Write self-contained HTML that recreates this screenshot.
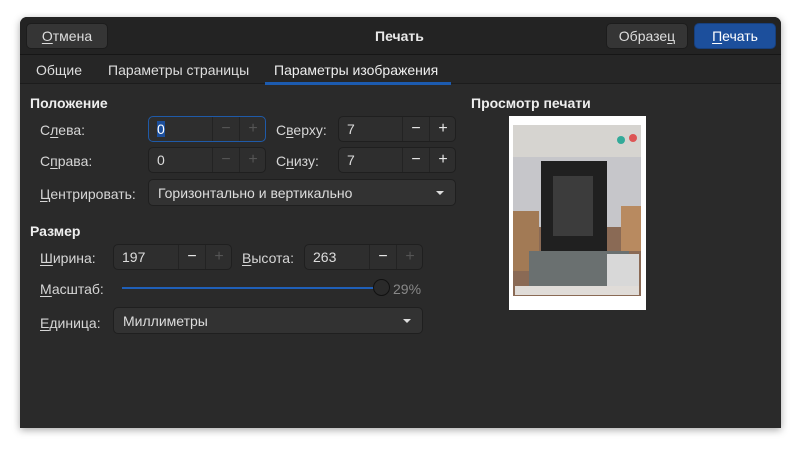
<!DOCTYPE html>
<html><head><meta charset="utf-8"><style>
*{margin:0;padding:0;box-sizing:border-box}
body{width:800px;height:450px;background:#fff;position:relative;overflow:hidden;font-family:"Liberation Sans","DejaVu Sans",sans-serif;font-size:14px;color:#e8e8e8}
.win{position:absolute;left:20px;top:17px;width:761px;height:411px;background:#2a2a2a;border-radius:7px 7px 0 0;box-shadow:0 2px 8px rgba(0,0,0,.35);overflow:hidden}
.hb{position:absolute;left:0;top:0;width:761px;height:38px;background:#232323;border-bottom:1px solid #161616}
.tabs{position:absolute;left:0;top:38px;width:761px;height:29px;background:#262626;border-bottom:1px solid #1c1c1c}
.a{position:absolute;white-space:nowrap}
.btn{position:absolute;background:#353535;border:1px solid #1c1c1c;border-radius:5px;text-align:center;line-height:24px;color:#ddd}
u{text-decoration:underline;text-underline-offset:2px}
.lbl{position:absolute;color:#d6d6d6;white-space:nowrap}
.spin{position:absolute;height:26px;background:#2e2e2e;border:1px solid #1f1f1f;border-radius:5px}
.spin .v{position:absolute;left:8px;top:4px;color:#ddd}
.spin .m,.spin .p{position:absolute;top:0;width:27px;height:24px;text-align:center;line-height:23px;border-left:1px solid #232323;font-size:16px}
.dim{color:#555}
.combo{position:absolute;height:27px;background:#323232;border:1px solid #1f1f1f;border-radius:5px}
.combo .v{position:absolute;left:9px;top:5px;color:#ddd}
.combo .ar{position:absolute;right:11px;top:11px;width:0;height:0;border-left:4px solid transparent;border-right:4px solid transparent;border-top:4px solid #ddd}
b{font-weight:bold;color:#eee}
</style></head><body>
<div class="win">
 <div class="hb"></div>
 <div class="btn" style="left:6px;top:6px;width:82px;height:26px"><u>О</u>тмена</div>
 <div class="a" style="left:355px;top:11px;font-weight:bold">Печать</div>
 <div class="btn" style="left:586px;top:6px;width:82px;height:26px">Образе<u>ц</u></div>
 <div class="btn" style="left:674px;top:6px;width:82px;height:26px;background:#1c4f9c;border-color:#173f7c;color:#fff"><u>П</u>ечать</div>
 <div class="tabs"></div>
 <div class="a" style="left:16px;top:45px;color:#ddd">Общие</div>
 <div class="a" style="left:88px;top:45px;color:#ddd">Параметры страницы</div>
 <div class="a" style="left:254px;top:45px;color:#eee">Параметры изображения</div>
 <div class="a" style="left:245px;top:65px;width:186px;height:3px;background:#1c5bb0"></div>

 <div class="a" style="left:10px;top:78px"><b>Положение</b></div>
 <div class="lbl" style="left:20px;top:105px">С<u>л</u>ева:</div>
 <div class="spin" style="left:128px;top:99px;width:118px;border-color:#1f5aa8"><span class="v" style="background:#1c4f9c;color:#fff">0</span><span class="m dim" style="left:63px">−</span><span class="p dim" style="left:90px">+</span></div>
 <div class="lbl" style="left:256px;top:105px">С<u>в</u>ерху:</div>
 <div class="spin" style="left:318px;top:99px;width:118px"><span class="v">7</span><span class="m" style="left:63px">−</span><span class="p" style="left:90px">+</span></div>
 <div class="lbl" style="left:20px;top:136px">С<u>п</u>рава:</div>
 <div class="spin" style="left:128px;top:130px;width:118px"><span class="v">0</span><span class="m dim" style="left:63px">−</span><span class="p dim" style="left:90px">+</span></div>
 <div class="lbl" style="left:256px;top:136px">С<u>н</u>изу:</div>
 <div class="spin" style="left:318px;top:130px;width:118px"><span class="v">7</span><span class="m" style="left:63px">−</span><span class="p" style="left:90px">+</span></div>
 <div class="lbl" style="left:20px;top:169px"><u>Ц</u>ентрировать:</div>
 <div class="combo" style="left:128px;top:162px;width:308px"><span class="v">Горизонтально и вертикально</span><span class="ar"></span></div>

 <div class="a" style="left:10px;top:206px"><b>Размер</b></div>
 <div class="lbl" style="left:20px;top:233px"><u>Ш</u>ирина:</div>
 <div class="spin" style="left:93px;top:227px;width:119px"><span class="v">197</span><span class="m" style="left:64px">−</span><span class="p dim" style="left:91px">+</span></div>
 <div class="lbl" style="left:222px;top:233px"><u>В</u>ысота:</div>
 <div class="spin" style="left:284px;top:227px;width:119px"><span class="v">263</span><span class="m" style="left:64px">−</span><span class="p dim" style="left:91px">+</span></div>
 <div class="lbl" style="left:20px;top:264px"><u>М</u>асштаб:</div>
 <div class="a" style="left:102px;top:270px;width:260px;height:2px;background:#1f5fb8"></div>
 <div class="a" style="left:353px;top:262px;width:17px;height:17px;border-radius:50%;background:#2a2a2a;border:1px solid #111"></div>
 <div class="lbl" style="left:373px;top:264px;color:#888">29%</div>
 <div class="lbl" style="left:20px;top:298px"><u>Е</u>диница:</div>
 <div class="combo" style="left:93px;top:290px;width:310px"><span class="v">Миллиметры</span><span class="ar"></span></div>

 <div class="a" style="left:451px;top:78px"><b>Просмотр печати</b></div>
 <div class="a" style="left:489px;top:99px;width:137px;height:194px;background:#fff">
  <svg width="137" height="194" viewBox="0 0 137 194" style="position:absolute;left:0;top:0">
   <rect x="4" y="9" width="128" height="171" fill="#8a6a55"/>
   <rect x="4" y="9" width="128" height="32" fill="#d6d4d0"/>
   <rect x="4" y="41" width="128" height="70" fill="#c6c6ca"/>
   <rect x="32" y="45" width="66" height="95" fill="#202020"/>
   <rect x="44" y="60" width="40" height="60" fill="#3c3c3c"/>
   <rect x="4" y="95" width="26" height="60" fill="#a27a55"/>
   <rect x="112" y="90" width="20" height="45" fill="#b88a60"/>
   <rect x="20" y="135" width="100" height="42" fill="#6a7070"/>
   <rect x="98" y="138" width="32" height="38" fill="#d8d8d8"/>
   <rect x="6" y="170" width="124" height="9" fill="#e0dcd8"/>
   <circle cx="112" cy="24" r="4" fill="#3a9"/><circle cx="124" cy="22" r="4" fill="#d55"/>
  </svg>
 </div>
</div>
</body></html>
